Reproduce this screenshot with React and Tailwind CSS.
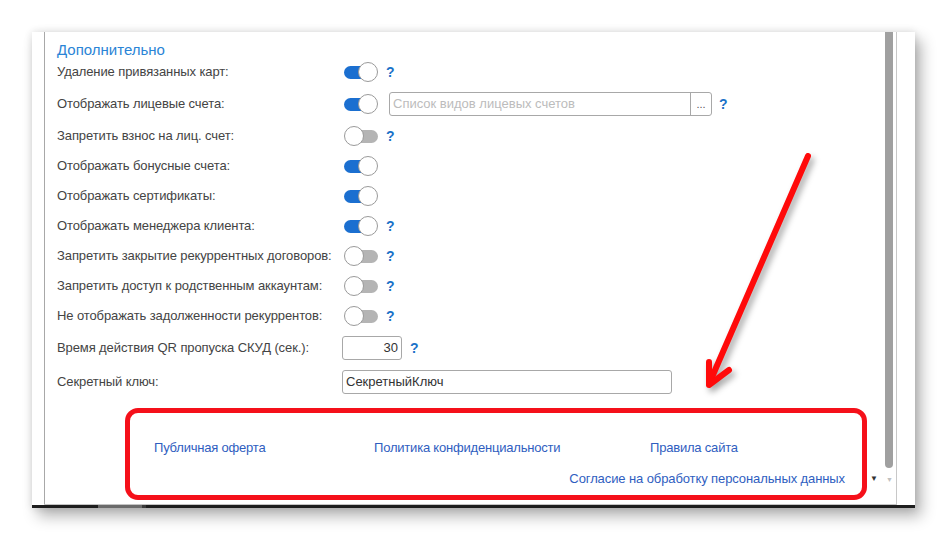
import React from 'react';

const Help = () => (
    <span className="text-[14px] font-bold text-[#1b72c8] leading-none">?</span>
);

const Toggle = ({ on }) => (
    <div className="relative w-[34px] h-[20px] shrink-0">
        {on ? (
            <>
                <div className="absolute left-0 top-[4px] w-[26px] h-[13px] rounded-full bg-[#1b6fd0]" />
                <div className="absolute right-0 top-0 w-[20px] h-[20px] rounded-full bg-white border border-[#9a9a9a]" />
            </>
        ) : (
            <>
                <div className="absolute right-0 top-[4px] w-[26px] h-[13px] rounded-full bg-[#b4b4b4]" />
                <div className="absolute left-0 top-0 w-[20px] h-[20px] rounded-full bg-white border border-[#9a9a9a]" />
            </>
        )}
    </div>
);

const rows = [
    { label: 'Удаление привязанных карт:', on: true, help: true, h: 'h-[30px]' },
    { label: 'Отображать лицевые счета:', on: true, list: true, h: 'h-[34px]' },
    { label: 'Запретить взнос на лиц. счет:', on: false, help: true, h: 'h-[30px]' },
    { label: 'Отображать бонусные счета:', on: true, h: 'h-[30px]' },
    { label: 'Отображать сертификаты:', on: true, h: 'h-[30px]' },
    { label: 'Отображать менеджера клиента:', on: true, help: true, h: 'h-[30px]' },
    { label: 'Запретить закрытие рекуррентных договоров:', on: false, help: true, h: 'h-[30px]' },
    { label: 'Запретить доступ к родственным аккаунтам:', on: false, help: true, h: 'h-[30px]' },
    { label: 'Не отображать задолженности рекуррентов:', on: false, help: true, h: 'h-[30px]' },
];

const App = () => {
    return (
        <div className="relative w-[947px] h-[540px] bg-white pt-[32px] pl-[32px] font-['Liberation_Sans',Arial,sans-serif] overflow-hidden">
            <div className="flex flex-col w-[883px] h-[476px] bg-white shadow-[0_0_8px_rgba(0,0,0,0.12),6px_8px_14px_rgba(0,0,0,0.3)]">
                <div className="flex flex-1 min-h-0">
                    <div className="w-[12px] shrink-0" />
                    <div className="flex flex-1 min-w-0 border-b border-[#c4c4c4]">
                        {/* main form */}
                        <div className="flex-1 flex flex-col border-l border-[#a8a8a8] pl-[12px]">
                            <div className="h-[25px] pt-[9px] text-[15px] leading-[17px] text-[#2a84d6]">Дополнительно</div>
                            {rows.map((r) => (
                                <div key={r.label} className={`flex items-center ${r.h}`}>
                                    <div className="w-[285px] shrink-0 text-[13px] tracking-[-0.1px] text-[#444]">{r.label}</div>
                                    <div className="flex items-center ml-[2px]">
                                        <Toggle on={r.on} />
                                        {r.list && (
                                            <div className="flex items-center ml-[11px] w-[323px] h-[24px] border border-[#a8a8a8] rounded-[3px]">
                                                <div className="flex-1 pl-[3px] text-[13px] text-[#bcbcbc]">Список видов лицевых счетов</div>
                                                <div className="w-[21px] h-full border-l border-[#a8a8a8] flex items-center justify-center text-[11px] text-[#555]">...</div>
                                            </div>
                                        )}
                                        {(r.help || r.list) && (
                                            <div className={r.list ? 'ml-[7px]' : 'ml-[8px]'}><Help /></div>
                                        )}
                                    </div>
                                </div>
                            ))}
                            <div className="flex items-center h-[34px]">
                                <div className="w-[285px] shrink-0 text-[13px] tracking-[-0.1px] text-[#444]">Время действия QR пропуска СКУД (сек.):</div>
                                <div className="w-[60px] h-[24px] border border-[#a8a8a8] rounded-[3px] flex items-center justify-end pr-[3px] text-[13px] text-[#333]">30</div>
                                <div className="ml-[8px]"><Help /></div>
                            </div>
                            <div className="flex items-center h-[34px]">
                                <div className="w-[285px] shrink-0 text-[13px] tracking-[-0.1px] text-[#444]">Секретный ключ:</div>
                                <div className="w-[330px] h-[24px] border border-[#a8a8a8] rounded-[3px] flex items-center pl-[3px] text-[13px] text-[#333]">СекретныйКлюч</div>
                            </div>
                            <div className="flex items-end mt-[9px] ml-[68px]">
                                <div className="w-[742px] h-[92px] border-[5px] border-[#f5101a] rounded-[13px] flex flex-col pl-[24px] pr-[17px]">
                                    <div className="flex items-center h-[24px] mt-[23px] text-[13px] tracking-[-0.2px] text-[#2f5ebf]">
                                        <div className="w-[220px]">Публичная оферта</div>
                                        <div className="w-[276px]">Политика конфиденциальности</div>
                                        <div>Правила сайта</div>
                                    </div>
                                    <div className="flex justify-end items-center h-[24px] mt-[7px] text-[13px] tracking-[-0.1px] text-[#2f5ebf]">
                                        Согласие на обработку персональных данных
                                    </div>
                                </div>
                                <div className="ml-[3px] mb-[17px] text-[8px] text-[#333] leading-none">▼</div>
                            </div>
                        </div>
                        {/* scrollbar */}
                        <div className="w-[12px] shrink-0 flex flex-col border-r border-[#c8c8c8]">
                            <div className="w-[8px] h-[436px] bg-[#a0a0a0] rounded-b-[4px]" />
                            <div className="mt-[8px] ml-[1px] text-[7px] text-[#c0c0c0] leading-none">▼</div>
                        </div>
                    </div>
                    <div className="w-[18px] shrink-0" />
                </div>
                <div className="flex h-[3px] shrink-0">
                    <div className="w-[66px] bg-[#1e1e1e]" />
                    <div className="w-[44px] bg-[#6a6a6a]" />
                    <div className="w-[4px] bg-[#3a3a3a]" />
                    <div className="flex-1 bg-[#1e1e1e]" />
                </div>
            </div>

            {/* red annotation arrow */}
            <svg className="absolute left-0 top-0 pointer-events-none" width="947" height="540" style={{ filter: 'drop-shadow(3px 4px 3px rgba(0,0,0,0.35))' }}>
                <g stroke="#ff0a0a" strokeWidth="6" strokeLinecap="round" strokeLinejoin="round" fill="none">
                    <line x1="808" y1="156" x2="709" y2="384" />
                    <polyline points="709,362 709,385 729,370" />
                </g>
            </svg>
        </div>
    );
};

export default App;
